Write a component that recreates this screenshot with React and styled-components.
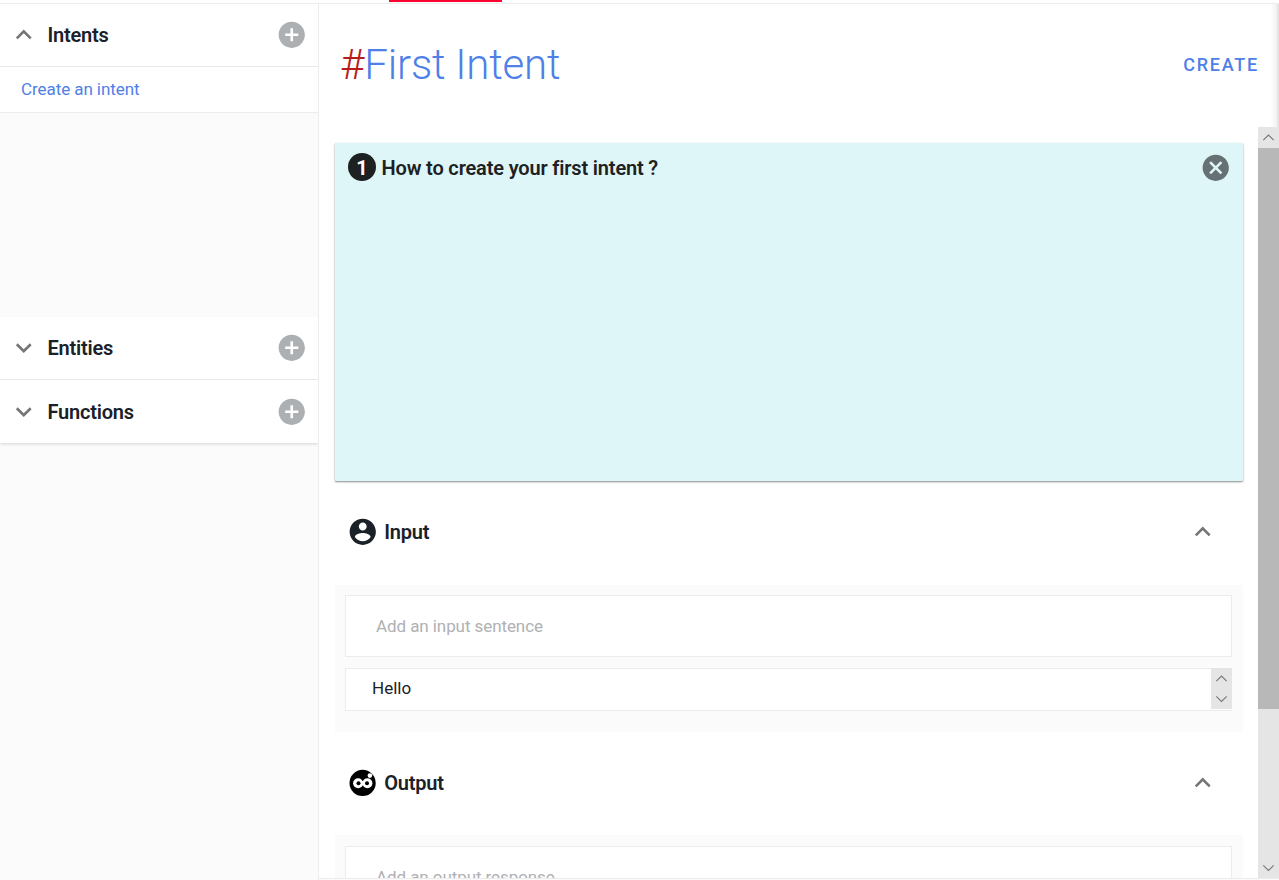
import React from "react";
import styled, { createGlobalStyle } from "styled-components";

const GlobalStyle = createGlobalStyle`
  * { box-sizing: border-box; }
  html, body { margin: 0; height: 100%; overflow: hidden; }
  body { background: #fff; color: #1a2129; font-family: Roboto, "Liberation Sans", sans-serif; }
  svg { display: block; flex: none; }
  h1, h2, h3 { margin: 0; }
`;

const Page = styled.div`
  display: flex;
  flex-direction: column;
  width: 1279px;
  height: 880px;
  overflow: hidden;
`;

const TabStrip = styled.div`
  flex: none;
  height: 4px;
  padding-left: 389px;
  border-bottom: 1px solid #ececec;
`;

const ActiveTab = styled.div`
  width: 113px;
  height: 2px;
  background: #fb0432;
`;

const Body = styled.div`
  display: flex;
  flex: 1;
  min-height: 0;
`;

const Sidebar = styled.aside`
  flex: none;
  width: 319px;
  overflow: hidden;
  background: #fbfbfb;
  border-right: 1px solid #ececec;
`;

const Accordion = styled.div`
  box-shadow: 0 1px 3px rgba(0, 0, 0, 0.16);
`;

const GroupHeader = styled.div`
  display: flex;
  align-items: center;
  height: 63px;
  padding: 0 11px 0 8px;
  background: #fff;
  border-bottom: ${(p) => (p.$last ? "none" : "1px solid #e9e9e9")};
`;

const GroupTitle = styled.h2`
  flex: 1;
  margin-left: 8px;
  font-size: 20px;
  line-height: 24px;
  font-weight: 600;
  letter-spacing: -0.22px;
`;

const IntentList = styled.div`
  height: 250px;
  background: #fbfbfb;
`;

const IntentItem = styled.div`
  height: 46px;
  padding-left: 21px;
  background: #fff;
  border-bottom: 1px solid #ececec;
  color: #4f80e8;
  font-size: 17px;
  line-height: 44px;
  letter-spacing: -0.07px;
`;

const Main = styled.main`
  display: flex;
  flex: 1;
  flex-direction: column;
  min-width: 0;
`;

const MainHeader = styled.header`
  display: flex;
  flex: none;
  align-items: center;
  justify-content: space-between;
  height: 123px;
  padding: 0 20px 2px 21px;
  background: linear-gradient(to left, #dedede, #f4f4f4 3px, #fff 9px);
`;

const Title = styled.h1`
  color: #4f80e8;
  font-size: 42px;
  line-height: 50px;
  font-weight: 300;
  letter-spacing: -0.19px;
`;

const Hash = styled.span`
  color: #b71c1c;
`;

const CreateButton = styled.button`
  padding: 0;
  border: 0;
  background: none;
  color: #4f80e8;
  font: 500 18px/24px Roboto, sans-serif;
  letter-spacing: 1.75px;
`;

const Scroller = styled.div`
  display: flex;
  flex: none;
  height: 751px;
  overflow: hidden;
`;

const Content = styled.div`
  flex: 1;
  min-width: 0;
  padding: 16px 15px 0 16px;
`;

const HelpCard = styled.section`
  height: 338px;
  padding: 10px 11.5px 10px 13px;
  background: #dff6f9;
  border-radius: 1px;
  box-shadow: 0 1px 2px rgba(0, 0, 0, 0.45), 0 0 1px rgba(0, 0, 0, 0.15);
`;

const HelpHeading = styled.div`
  display: flex;
  align-items: center;
  height: 30px;
`;

const Step = styled.span`
  width: 28px;
  height: 28px;
  margin-bottom: 2px;
  border-radius: 50%;
  background: #1d2122;
  color: #fff;
  font-size: 20px;
  font-weight: 700;
  line-height: 30px;
  text-align: center;
`;

const HelpTitle = styled.h3`
  flex: 1;
  margin-left: 5.5px;
  color: #1d2122;
  font-size: 20px;
  line-height: 24px;
  font-weight: 600;
  letter-spacing: -0.16px;
`;

const SectionHeader = styled.div`
  display: flex;
  align-items: center;
  height: ${(p) => p.$height}px;
  padding: 0 25px ${(p) => p.$bottom}px 12.2px;
`;

const SectionTitle = styled.h2`
  flex: 1;
  margin-left: 5.5px;
  font-size: 20px;
  line-height: 24px;
  font-weight: 600;
  letter-spacing: -0.22px;
`;

const Panel = styled.div`
  height: 147px;
  padding: ${(p) => p.$top}px 11px 0 10px;
  background: #fbfbfb;
`;

const Field = styled.div`
  height: 62px;
  padding-left: 30px;
  background: #fff;
  border: 1px solid #ececec;
  color: #afb1b3;
  font-size: 17px;
  line-height: 60px;
  letter-spacing: -0.08px;
`;

const Sentence = styled.div`
  display: flex;
  justify-content: space-between;
  height: 43px;
  margin-top: 11px;
  padding-left: 26px;
  background: #fff;
  border: 1px solid #ececec;
  border-right: 0;
  font-size: 17px;
  line-height: 38px;
`;

const MiniScroll = styled.div`
  display: flex;
  flex-direction: column;
  width: 21px;
  height: 41px;
  margin-top: -1px;
  overflow: hidden;
  background: #e5e5e5;

  svg + svg {
    margin-top: -1px;
  }
`;

const Scrollbar = styled.div`
  display: flex;
  flex: none;
  flex-direction: column;
  width: 21px;
  background: #e5e5e5;
`;

const Thumb = styled.div`
  height: 561px;
  margin-bottom: auto;
  background: #b8b8b8;
`;

const BottomRule = styled.div`
  flex: none;
  height: 2px;
  border-top: 1px solid #ececec;
  background: #fbfbfb;
`;

function Chevron({ down }) {
  return (
    <svg width="31.5" height="31.5" viewBox="0 0 24 24" fill="#757575">
      <path d={down ? "M7.41 8.59 12 13.17l4.59-4.58L18 10l-6 6-6-6z" : "M12 8l-6 6 1.41 1.41L12 10.83l4.59 4.58L18 14z"} />
    </svg>
  );
}

function AddIcon() {
  return (
    <svg width="31.5" height="31.5" viewBox="0 0 24 24" fill="#adb0b2">
      <path d="M12 2C6.48 2 2 6.48 2 12s4.48 10 10 10 10-4.48 10-10S17.52 2 12 2zm5 11h-4v4h-2v-4H7v-2h4V7h2v4h4v2z" />
    </svg>
  );
}

function CloseIcon() {
  return (
    <svg width="31.5" height="31.5" viewBox="0 0 24 24" fill="#667174" stroke="#667174" strokeWidth="0">
      <path d="M12 2C6.47 2 2 6.47 2 12s4.47 10 10 10 10-4.47 10-10S17.53 2 12 2zm5 13.59L15.59 17 12 13.41 8.41 17 7 15.59 10.59 12 7 8.41 8.41 7 12 10.59 15.59 7 17 8.41 13.41 12 17 15.59z" />
    </svg>
  );
}

function UserIcon() {
  return (
    <svg width="31.5" height="31.5" viewBox="0 0 24 24" fill="#1a2129">
      <path d="M12 2C6.48 2 2 6.48 2 12s4.48 10 10 10 10-4.48 10-10S17.52 2 12 2zm0 3c1.66 0 3 1.34 3 3s-1.34 3-3 3-3-1.34-3-3 1.34-3 3-3zm0 14.2c-2.5 0-4.71-1.28-6-3.22.03-1.99 4-3.08 6-3.08 1.99 0 5.97 1.09 6 3.08-1.29 1.94-3.5 3.22-6 3.22z" />
    </svg>
  );
}

function BotIcon() {
  return (
    <svg width="31.5" height="31.5" viewBox="0 0 31.5 31.5">
      <circle cx="15.6" cy="15.9" r="13.1" fill="#000" />
      <circle cx="22.9" cy="8.6" r="2.3" fill="#fff" />
      <circle cx="11.1" cy="16.2" r="5" fill="#fff" />
      <circle cx="20.4" cy="16.2" r="5" fill="#fff" />
      <path d="M14.5 14h2.5v4.4h-2.5z" fill="#fff" />
      <circle cx="11.5" cy="16.2" r="2" fill="#000" />
      <circle cx="20" cy="16.2" r="2" fill="#000" />
    </svg>
  );
}

function Arrow({ down }) {
  return (
    <svg width="21" height="21" viewBox="0 0 21 21" fill="none" stroke="#777" strokeWidth="1.1">
      <path d={down ? "M5.3 8.3 10.5 13.5 15.7 8.3" : "M5.3 13.2 10.5 8 15.7 13.2"} />
    </svg>
  );
}

function Group({ title, open, last }) {
  return (
    <GroupHeader $last={last}>
      <Chevron down={!open} />
      <GroupTitle>{title}</GroupTitle>
      <AddIcon />
    </GroupHeader>
  );
}

export default function App() {
  return (
    <Page>
      <GlobalStyle />
      <TabStrip>
        <ActiveTab />
      </TabStrip>
      <Body>
        <Sidebar>
          <Accordion>
            <Group title="Intents" open />
            <IntentList>
              <IntentItem>Create an intent</IntentItem>
            </IntentList>
            <Group title="Entities" />
            <Group title="Functions" last />
          </Accordion>
        </Sidebar>
        <Main>
          <MainHeader>
            <Title>
              <Hash>#</Hash>First Intent
            </Title>
            <CreateButton>CREATE</CreateButton>
          </MainHeader>
          <Scroller>
            <Content>
              <HelpCard>
                <HelpHeading>
                  <Step>1</Step>
                  <HelpTitle>How to create your first intent ?</HelpTitle>
                  <CloseIcon />
                </HelpHeading>
              </HelpCard>
              <SectionHeader $height={104} $bottom={2}>
                <UserIcon />
                <SectionTitle>Input</SectionTitle>
                <Chevron />
              </SectionHeader>
              <Panel $top={10}>
                <Field>Add an input sentence</Field>
                <Sentence>
                  Hello
                  <MiniScroll>
                    <Arrow />
                    <Arrow down />
                  </MiniScroll>
                </Sentence>
              </Panel>
              <SectionHeader $height={103} $bottom={1}>
                <BotIcon />
                <SectionTitle>Output</SectionTitle>
                <Chevron />
              </SectionHeader>
              <Panel $top={11}>
                <Field>Add an output response</Field>
              </Panel>
            </Content>
            <Scrollbar>
              <Arrow />
              <Thumb />
              <Arrow down />
            </Scrollbar>
          </Scroller>
          <BottomRule />
        </Main>
      </Body>
    </Page>
  );
}
